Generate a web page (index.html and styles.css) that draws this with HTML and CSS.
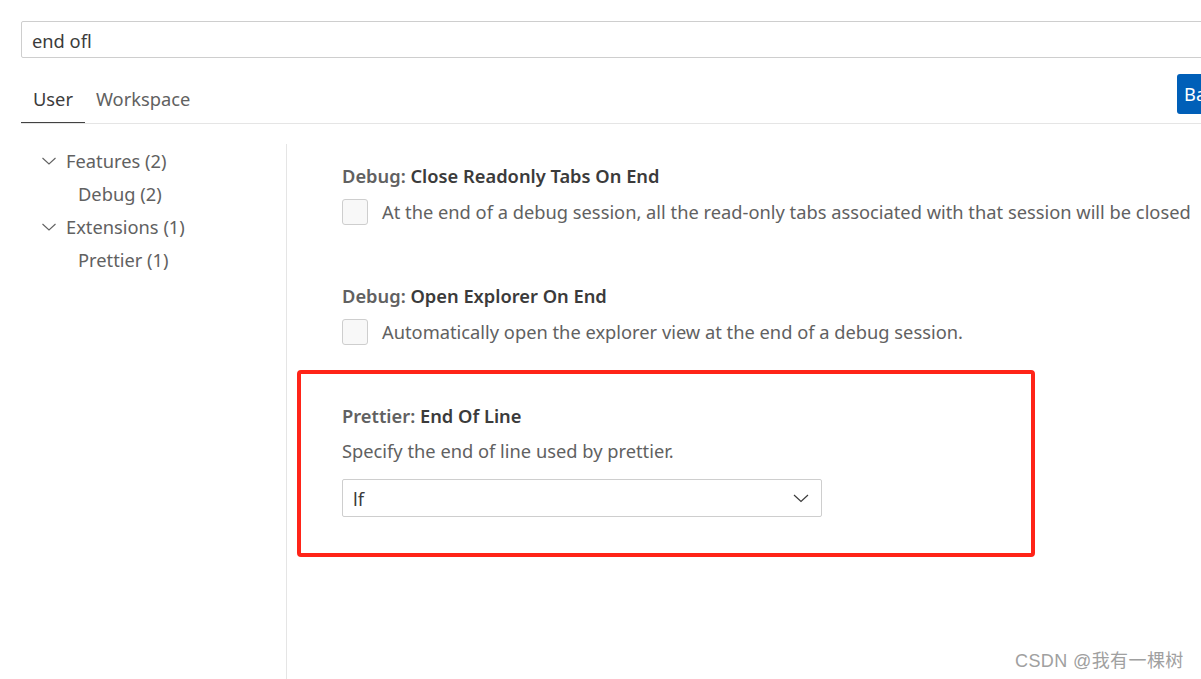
FILE: index.html
```html
<!DOCTYPE html>
<html>
<head>
<meta charset="utf-8">
<link rel="stylesheet" href="styles.css">
</head>
<body>
<div class="page">
  <div class="search">end ofl</div>
  <div class="tabs-row">
    <div class="tabs">
      <div class="tab active">User</div>
      <div class="tab">Workspace</div>
    </div>
    <div class="backup-btn">Ba</div>
  </div>
  <div class="main">
    <div class="tree">
      <div class="tree-row"><svg class="chev" viewBox="0 0 16 16" width="16" height="16"><path d="M1.5 5 L8 11 L14.5 5" fill="none" stroke="#616161" stroke-width="1.1"/></svg><span>Features (2)</span></div>
      <div class="tree-row child"><span>Debug (2)</span></div>
      <div class="tree-row"><svg class="chev" viewBox="0 0 16 16" width="16" height="16"><path d="M1.5 5 L8 11 L14.5 5" fill="none" stroke="#616161" stroke-width="1.1"/></svg><span>Extensions (1)</span></div>
      <div class="tree-row child"><span>Prettier (1)</span></div>
    </div>
    <div class="settings">
      <div class="setting">
        <div class="title"><span class="cat">Debug: </span>Close Readonly Tabs On End</div>
        <div class="check-row"><div class="checkbox"></div><span>At the end of a debug session, all the read-only tabs associated with that session will be closed</span></div>
      </div>
      <div class="setting">
        <div class="title"><span class="cat">Debug: </span>Open Explorer On End</div>
        <div class="check-row"><div class="checkbox"></div><span>Automatically open the explorer view at the end of a debug session.</span></div>
      </div>
      <div class="setting prettier">
        <div class="title"><span class="cat">Prettier: </span>End Of Line</div>
        <div class="desc">Specify the end of line used by prettier.</div>
        <div class="select"><span>lf</span><svg viewBox="0 0 16 16" width="16" height="16"><path d="M1 5 L8 11.5 L15 5" fill="none" stroke="#3b3b3b" stroke-width="1.2"/></svg></div>
      </div>
    </div>
  </div>
  <div class="highlight"></div>
  <div class="watermark">CSDN @我有一棵树</div>
</div>
</body>
</html>
```
FILE: styles.css
```css
html, body {
  margin: 0;
  padding: 0;
  background: #ffffff;
  overflow: hidden;
}
.page {
  position: relative;
  width: 1201px;
  height: 679px;
  overflow: hidden;
  font-family: "Noto Sans", "Open Sans", sans-serif;
  color: #616161;
  padding-left: 21px;
  box-sizing: border-box;
}
.search {
  margin-top: 21px;
  width: 1200px;
  height: 37px;
  box-sizing: border-box;
  border: 1px solid #cecece;
  border-radius: 2px;
  padding: 3px 0 0 10px;
  font-size: 18.3px;
  line-height: 32px;
  color: #3b3b3b;
}
.tabs-row {
  display: flex;
  margin-top: 16px;
  height: 49px;
  border-bottom: 1px solid #e5e5e5;
  width: 1200px;
}
.tabs {
  display: flex;
  height: 49px;
}
.tab {
  font-size: 18.3px;
  line-height: 50px;
  color: #616161;
  padding-left: 11px;
}
.tab.active {
  color: #3b3b3b;
  border-bottom: 1px solid #424242;
  padding-left: 12px;
  padding-right: 12px;
  height: 48px;
}
.backup-btn {
  margin-left: auto;
  width: 44px;
  height: 40px;
  background: #005fb8;
  color: #ffffff;
  border-radius: 3px;
  font-size: 18.3px;
  line-height: 40px;
  padding-left: 7px;
  box-sizing: border-box;
  overflow: hidden;
}
.main {
  display: flex;
  margin-top: 20px;
}
.tree {
  width: 265px;
  box-sizing: border-box;
}
.tree-row {
  height: 33px;
  display: flex;
  align-items: center;
  font-size: 18.3px;
  color: #616161;
  padding-left: 20px;
}
.tree-row .chev {
  margin-right: 9px;
}
.tree-row.child {
  padding-left: 57px;
}
.settings {
  border-left: 1px solid #e5e5e5;
  padding-left: 55px;
  height: 540px;
  flex: 1;
}
.setting .title {
  font-size: 18.3px;
  font-weight: 600;
  color: #3b3b3b;
  line-height: 24px;
}
.setting .title .cat {
  color: #616161;
}
.setting:nth-child(1) { padding-top: 20px; }
.setting:nth-child(2) { padding-top: 59px; }
.setting.prettier { padding-top: 59px; }
.check-row {
  display: flex;
  align-items: center;
  margin-top: 11px;
  font-size: 18.3px;
  line-height: 24px;
  color: #616161;
  white-space: nowrap;
}
.checkbox {
  width: 24px;
  height: 24px;
  border: 1px solid #cecece;
  border-radius: 3px;
  background: #f8f8f8;
  margin-right: 14px;
  flex: none;
}
.desc {
  margin-top: 11px;
  font-size: 18.3px;
  color: #616161;
  line-height: 24px;
}
.select {
  margin-top: 16px;
  width: 480px;
  height: 38px;
  box-sizing: border-box;
  border: 1px solid #cecece;
  border-radius: 2px;
  display: flex;
  align-items: center;
  justify-content: space-between;
  padding: 0 12px 0 10px;
  font-size: 18.3px;
  color: #3b3b3b;
}
.highlight {
  position: absolute;
  left: 297px;
  top: 370px;
  width: 738px;
  height: 187px;
  box-sizing: border-box;
  border: 4px solid #ff2418;
  border-radius: 4px;
}
.watermark {
  position: absolute;
  left: 1015px;
  top: 646px;
  font-family: "Liberation Sans", "Noto Sans CJK SC", sans-serif;
  font-size: 18px;
  color: #a0a0a0;
  letter-spacing: 0.4px;
}
```
